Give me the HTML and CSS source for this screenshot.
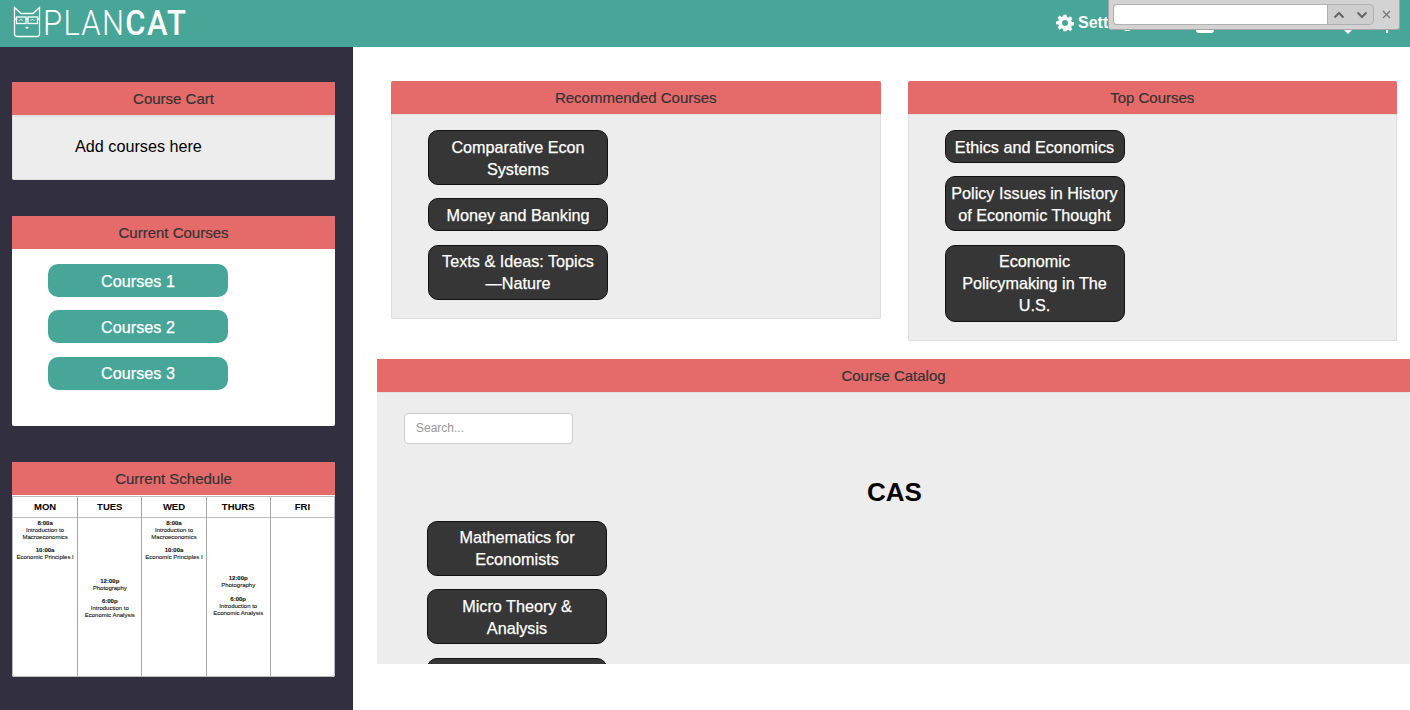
FILE: index.html
```html
<!DOCTYPE html>
<html lang="en">
<head>
<meta charset="utf-8">
<title>PlanCat</title>
<link rel="stylesheet" href="styles.css">
</head>
<body>
<header class="topbar">
  <div class="brand">
    <svg class="cat" width="28" height="32" viewBox="0 0 28 32" fill="none" stroke="#fff">
      <path d="M1.5 1.5 L8 7.5 H20 L26.500 1.500 V28 Q26.500 30.500 24 30.500 H4 Q1.500 30.500 1.500 28 Z" stroke-width="1.300"/>
      <rect x="3.500" y="11" width="9.500" height="6.500" stroke-width="1.300"/>
      <rect x="15" y="11" width="9.500" height="6.500" stroke-width="1.300"/>
      <path d="M1.500 13 H3.500 M13 13 H15 M24.500 13 H26.500" stroke-width="1.300"/>
      <path d="M6 14.500 Q8 12.500 10 14.500 M17.500 14.500 Q19.500 12.500 21.500 14.500" stroke-width=".8"/>
      <path d="M12.500 21 H15.500 L14 23 Z" fill="#fff" stroke-width=".5"/>
    </svg>
    <span class="logo-text"><span class="logo-thin">PLAN</span><span class="logo-bold">CAT</span></span>
  </div>
  <nav class="topnav">
    <span class="nav-settings">
      <svg width="18" height="18" viewBox="0 0 24 24" fill="#fff"><path fill-rule="evenodd" d="M10 1h4l.6 3.100 1.900.8 2.600-1.800 2.800 2.800-1.800 2.600.8 1.900 3.100.6v4l-3.100.6-.8 1.900 1.800 2.600-2.800 2.800-2.600-1.800-1.900.8L14 23h-4l-.6-3.100-1.900-.8-2.600 1.800-2.800-2.800 1.800-2.600-.8-1.900L0 14v-4l3.100-.6.8-1.900-1.800-2.600 2.800-2.800 2.600 1.800 1.900-.8zM12 8a4 4 0 1 0 0 8 4 4 0 0 0 0-8z"/></svg>
      Settings
    </span>
    <span class="nav-box"></span>
    <span class="nav-caret"></span>
    <span class="nav-tick"></span>
  </nav>
</header>

<div class="layout">
  <aside class="sidebar">
    <section class="panel">
      <h2 class="panel-heading">Course Cart</h2>
      <div class="cart-body">Add courses here</div>
    </section>

    <section class="panel panel-white">
      <h2 class="panel-heading">Current Courses</h2>
      <div class="current-body">
        <a class="btn btn-teal">Courses 1</a>
        <a class="btn btn-teal">Courses 2</a>
        <a class="btn btn-teal">Courses 3</a>
      </div>
    </section>

    <section class="panel panel-white">
      <h2 class="panel-heading">Current Schedule</h2>
      <div class="schedule">
        <div class="day">
          <div class="day-name">MON</div>
          <div class="day-body slot-mon">
            <p><b>8:00a</b><br>Introduction to<br>Macroeconomics</p>
            <p><b>10:00a</b><br>Economic Principles I</p>
          </div>
        </div>
        <div class="day">
          <div class="day-name">TUES</div>
          <div class="day-body slot-tue">
            <p><b>12:00p</b><br>Photography</p>
            <p><b>6:00p</b><br>Introduction to<br>Economic Analysis</p>
          </div>
        </div>
        <div class="day">
          <div class="day-name">WED</div>
          <div class="day-body slot-mon">
            <p><b>8:00a</b><br>Introduction to<br>Macroeconomics</p>
            <p><b>10:00a</b><br>Economic Principles I</p>
          </div>
        </div>
        <div class="day">
          <div class="day-name">THURS</div>
          <div class="day-body slot-thu">
            <p><b>12:00p</b><br>Photography</p>
            <p><b>6:00p</b><br>Introduction to<br>Economic Analysis</p>
          </div>
        </div>
        <div class="day">
          <div class="day-name">FRI</div>
          <div class="day-body"></div>
        </div>
      </div>
    </section>
  </aside>

  <main class="content">
    <div class="top-row">
      <section class="panel panel-grow">
        <h2 class="panel-heading">Recommended Courses</h2>
        <div class="course-body">
          <a class="btn btn-dark">Comparative Econ Systems</a>
          <a class="btn btn-dark">Money and Banking</a>
          <a class="btn btn-dark">Texts &amp; Ideas: Topics —Nature</a>
        </div>
      </section>
      <section class="panel panel-grow">
        <h2 class="panel-heading">Top Courses</h2>
        <div class="course-body">
          <a class="btn btn-dark">Ethics and Economics</a>
          <a class="btn btn-dark">Policy Issues in History of Economic Thought</a>
          <a class="btn btn-dark">Economic Policymaking in The U.S.</a>
        </div>
      </section>
    </div>

    <section class="panel catalog">
      <h2 class="panel-heading">Course Catalog</h2>
      <div class="catalog-body">
        <input class="search" type="text" placeholder="Search...">
        <h1 class="catalog-title">CAS</h1>
        <a class="btn btn-dark">Mathematics for Economists</a>
        <a class="btn btn-dark">Micro Theory &amp; Analysis</a>
        <a class="btn btn-dark btn-blank"></a>
      </div>
    </section>
  </main>
</div>

<div class="findbar">
  <div class="find-input"></div>
  <div class="find-nav">
    <svg width="12" height="8" viewBox="0 0 12 8" fill="none" stroke="#666" stroke-width="2"><path d="M1.500 6.500 L6 2 L10.500 6.500"/></svg>
    <svg width="12" height="8" viewBox="0 0 12 8" fill="none" stroke="#666" stroke-width="2"><path d="M1.500 1.500 L6 6 L10.500 1.500"/></svg>
  </div>
  <svg class="find-close" width="9" height="9" viewBox="0 0 9 9" fill="none" stroke="#777" stroke-width="1.300"><path d="M1 1 L8 8 M8 1 L1 8"/></svg>
</div>
</body>
</html>
```
FILE: styles.css
```css
* { box-sizing: border-box; }

html, body {
  margin: 0;
  height: 710px;
  overflow: hidden;
}

body {
  font-family: "Liberation Sans", Arial, sans-serif;
  color: #000;
  background: #fff;
}

.topbar {
  height: 47px;
  background: #48a699;
  display: flex;
  align-items: flex-start;
  justify-content: space-between;
}

.brand {
  display: flex;
  align-items: flex-start;
  padding: 6px 0 0 13px;
}

.cat { display: block; }

.logo-text {
  display: inline-block;
  font-family: Roboto, sans-serif;
  font-size: 35px;
  line-height: 36px;
  letter-spacing: 1.500px;
  color: #fff;
  margin-left: 2px;
  transform: scaleX(.885);
  transform-origin: left center;
}

.logo-thin { font-weight: 300; }
.logo-bold { font-weight: 500; }

.topnav {
  display: flex;
  align-items: flex-start;
  color: #fff;
  font-size: 16px;
  font-weight: 700;
  padding-top: 14px;
}

.nav-settings {
  display: flex;
  align-items: center;
  gap: 4px;
  width: 140px;
  height: 18px;
}

.nav-box {
  width: 18px;
  height: 17px;
  margin-top: 2px;
  border: 3px solid #fff;
  border-radius: 3px;
}

.nav-caret {
  width: 0;
  height: 0;
  margin: 15px 0 0 129px;
  border: 5px solid transparent;
  border-top-color: #fff;
}

.nav-tick {
  width: 2px;
  height: 19px;
  margin: 0 22px 0 33px;
  background: #fff;
}

.layout {
  display: flex;
  height: 663px;
}

.sidebar {
  width: 353px;
  flex: none;
  background: #322f41;
  padding: 35px 18px 0 12px;
  display: flex;
  flex-direction: column;
  gap: 36px;
}

.panel {
  background: #ededed;
  border-radius: 2px;
  border: 1px solid #ddd;
  border-top: 0;
}

.panel-white { background: #fff; border: 0; }

.panel-heading {
  margin: 0 -1px;
  height: 33px;
  background: #e56b6b;
  color: #333;
  font-size: 15px;
  font-weight: 400;
  line-height: 34px;
  text-align: center;
  border-radius: 2px 2px 0 0;
  -webkit-text-stroke: 0.2px #333;
}

.panel-white .panel-heading { margin: 0; }

.cart-body {
  height: 64px;
  padding: 19px 0 0 62px;
  font-size: 16.200px;
  line-height: 20px;
  border-top: 2px solid #e0e0e0;
}

.current-body {
  padding: 15px 0 36px 36px;
  height: 177px;
}

.btn {
  display: block;
  width: 180px;
  border-radius: 10px;
  font-size: 16.200px;
  line-height: 22px;
  text-align: center;
  color: #fff;
  -webkit-text-stroke: 0.25px #fff;
}

.btn-dark {
  padding: 4.500px 5px;
  background: #363636;
  border: 1px solid #111;
  margin-bottom: 13.400px;
}

.btn-blank { height: 55px; }

.btn-teal {
  padding: 5.500px 5px;
  background: #48a699;
  margin-bottom: 13.400px;
}

.schedule {
  display: grid;
  grid-template-columns: repeat(5, 1fr);
  height: 181px;
  margin-top: 1px;
  border: 1px solid #bbb;
  border-radius: 0 0 3px 3px;
  background: #fff;
}

.day {
  display: flex;
  flex-direction: column;
  border-left: 1px solid #a8a8a8;
  min-width: 0;
}

.day:first-child { border-left: 0; }

.day-name {
  height: 21px;
  line-height: 19px;
  text-align: center;
  font-size: 9.500px;
  font-weight: 700;
  border-bottom: 1px solid #bbb;
}

.day-body {
  flex: 1;
  text-align: center;
  font-size: 6px;
  line-height: 7px;
  color: #111;
  -webkit-text-stroke: 0.1px #111;
}

.day-body p { margin: 0 0 6.500px; }

.slot-mon { padding-top: 1.500px; }
.slot-tue { padding-top: 59.500px; }
.slot-thu { padding-top: 57px; }

.content {
  flex: 1;
  min-width: 0;
  padding: 34px 0 0 24px;
}

.top-row {
  display: flex;
  align-items: flex-start;
  gap: 27px;
  padding: 0 13px 0 14px;
}

.panel-grow { flex: 1; min-width: 0; }

.course-body {
  padding: 15px 0 4.500px 36px;
  border-top: 1px solid #e2e2e2;
}

.catalog {
  margin-top: 18.300px;
  height: 305px;
  overflow: hidden;
  border: 0;
  border-radius: 0;
}

.catalog .panel-heading { margin: 0; border-radius: 0; }

.catalog-body {
  padding: 20px 0 0 50px;
  border-top: 1px solid #e2e2e2;
}

.search {
  display: block;
  width: 169px;
  height: 31px;
  margin-left: -23px;
  padding: 0 11px;
  background: #fff;
  border: 1px solid #ccc;
  border-radius: 4px;
  font-family: inherit;
  font-size: 12px;
  color: #555;
}

.search::placeholder { color: #999; opacity: 1; }

.catalog-title {
  margin: 32px 0 13px -48px;
  text-align: center;
  font-size: 26px;
  line-height: 32px;
  font-weight: 700;
}

.findbar {
  position: absolute;
  top: 0;
  left: 1108px;
  width: 292px;
  height: 30px;
  display: flex;
  align-items: center;
  padding: 0 0 0 4px;
  background: #d3d3d3;
  border: 1px solid #a5a5a5;
  border-top: 0;
  border-radius: 0 0 3px 3px;
}

.find-input {
  width: 214px;
  height: 21px;
  background: #fff;
  border: 1px solid #b0b0b0;
  border-right: 0;
  border-radius: 4px 0 0 4px;
}

.find-nav {
  width: 47px;
  height: 21px;
  display: flex;
  align-items: center;
  justify-content: space-around;
  background: #cecece;
  border: 1px solid #b0b0b0;
  border-radius: 0 4px 4px 0;
}

.find-close { margin-left: 8px; }
```
